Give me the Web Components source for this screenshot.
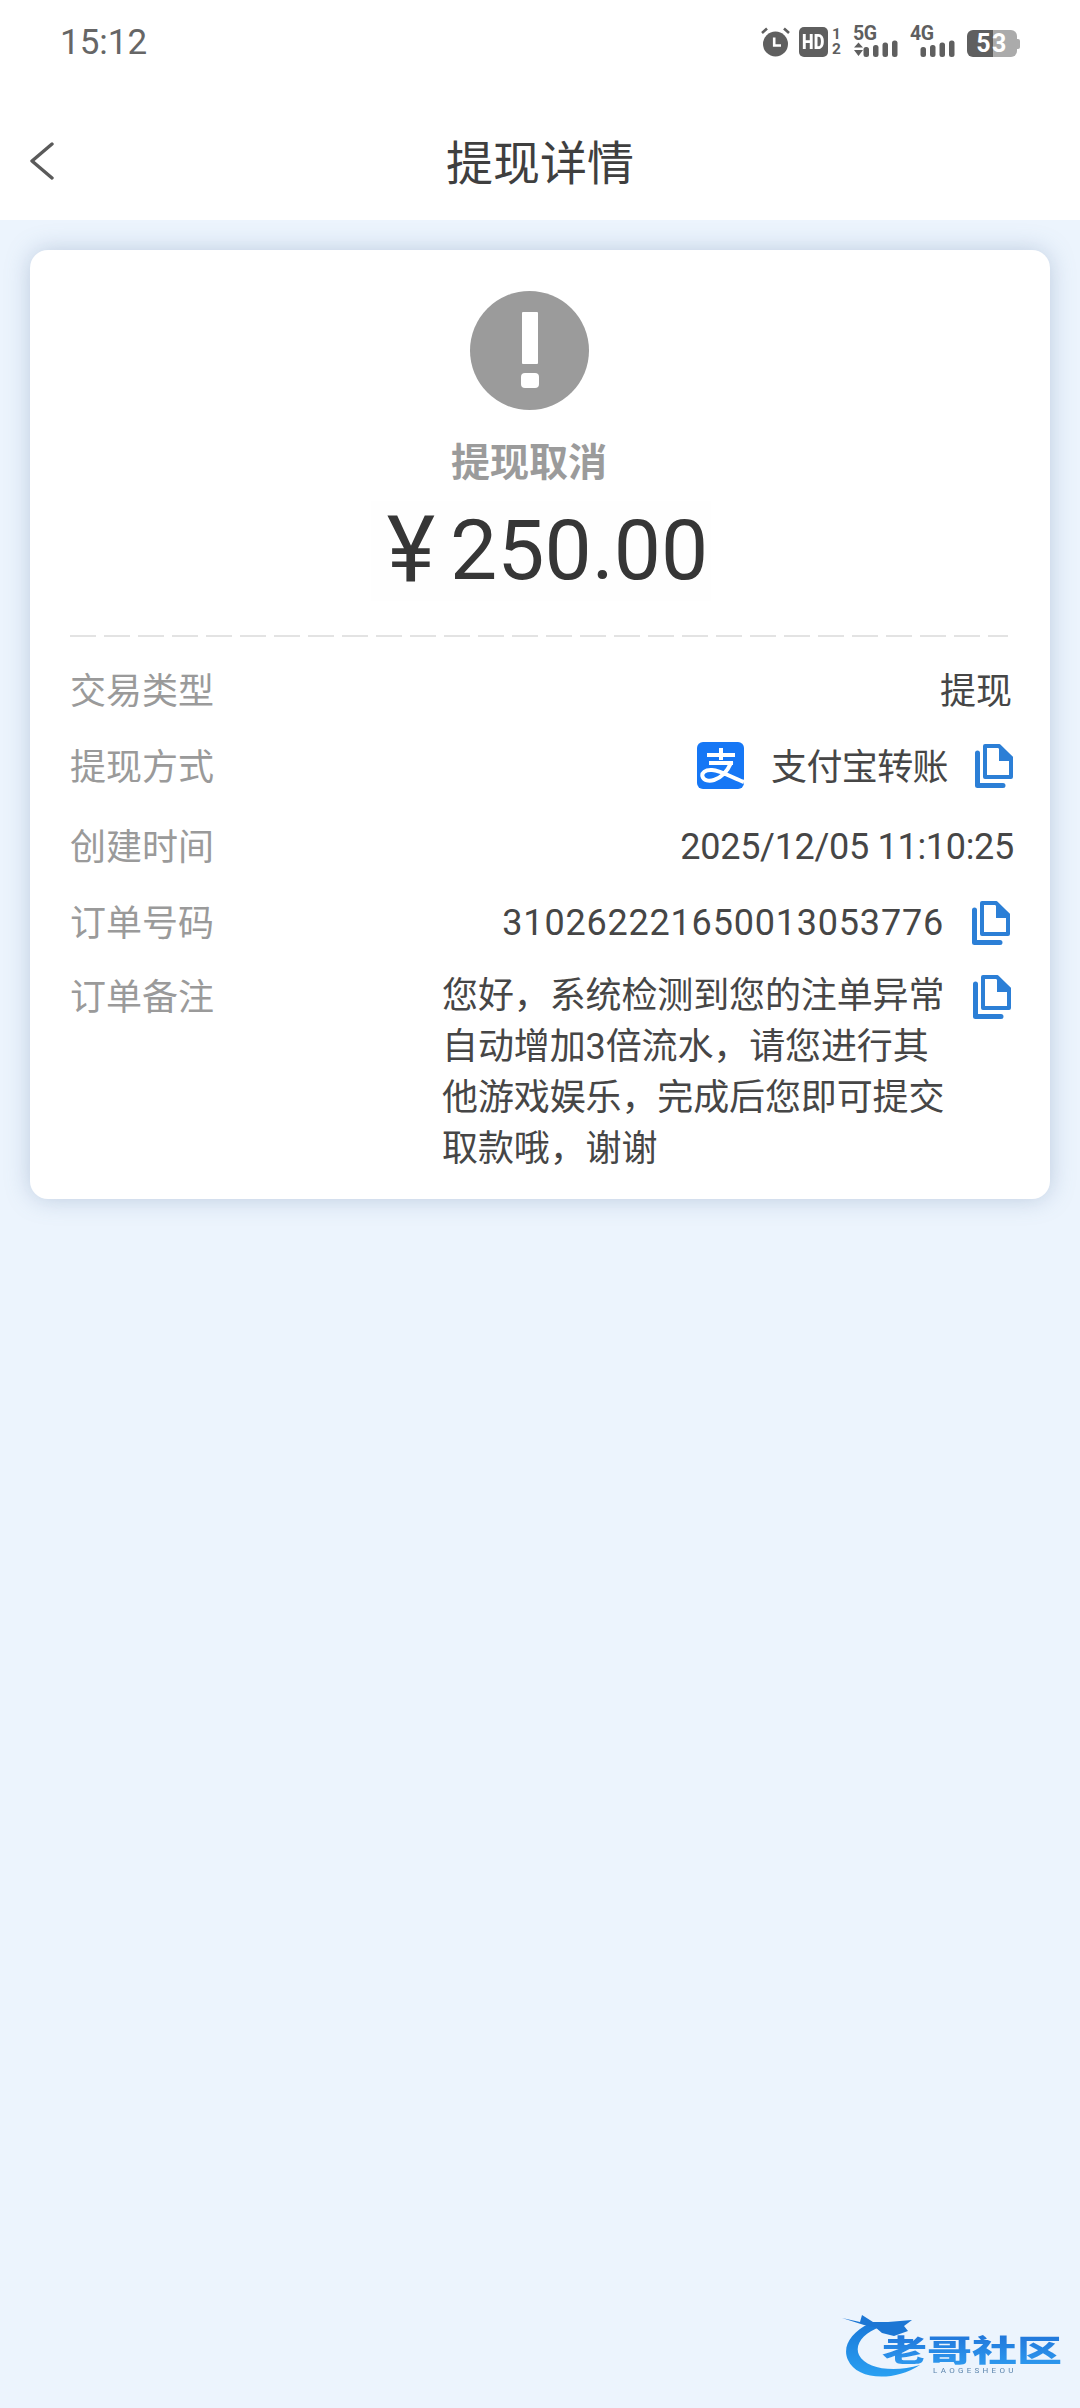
<!DOCTYPE html>
<html lang="zh">
<head>
<meta charset="utf-8">
<title>提现详情</title>
<style>
html,body{margin:0;padding:0;background:#ecf4fd;}
body{width:1080px;height:2408px;overflow:hidden;position:relative;font-family:Roboto,"Noto Sans CJK SC",sans-serif;color:#3a3a3a;}
.up{transform:translateY(-3px);display:block}
</style>
</head>
<body>
<x-status-bar time="15:12"></x-status-bar>
<x-nav-bar title="提现详情"></x-nav-bar>
<x-detail-card>
  <x-hero slot="hero" status="提现取消" currency="¥" amount="250.00"></x-hero>
  <x-row label="交易类型" h="76"><span class="up" style="margin-right:2px">提现</span></x-row>
  <x-row label="提现方式" h="76"><x-alipay-icon style="margin-bottom:3px"></x-alipay-icon><span class="up" style="margin:0 27px;letter-spacing:-.6px">支付宝转账</span><x-copy-icon style="margin:0 1px 2px 0"></x-copy-icon></x-row>
  <x-row label="创建时间" h="76" top="4"><span style="letter-spacing:-.3px">2025/12/05 11:10:25</span></x-row>
  <x-row label="订单号码" h="76"><span style="letter-spacing:.8px;margin-right:-1px">310262221650013053776</span><x-copy-icon style="margin:0 4px 0 29px"></x-copy-icon></x-row>
  <x-row label="订单备注" top="10" align="start"><x-note>您好，系统检测到您的注单异常自动增加3倍流水，请您进行其他游戏娱乐，完成后您即可提交取款哦，谢谢</x-note><x-copy-icon style="margin:4px 3px 0 26px"></x-copy-icon></x-row>
</x-detail-card>
<x-watermark></x-watermark>
<script>
const FONT='Roboto,"Noto Sans CJK SC",sans-serif';
function def(name,html,init){
  const t=document.createElement('template');t.innerHTML=html;
  customElements.define(name,class extends HTMLElement{
    connectedCallback(){
      if(this.shadowRoot)return;
      const r=this.attachShadow({mode:'open'});
      r.appendChild(t.content.cloneNode(true));
      if(init)init(this,r);
    }
  });
}
def('x-signal',`<style>
:host{display:block;position:relative;width:45px;height:30px;flex:none}
span{position:absolute;left:-1px;top:-3px;font:700 19.500px/20px Roboto,sans-serif;color:#5f5f5f;letter-spacing:-.5px;white-space:nowrap}
svg{display:block}
</style><span></span>
<svg width="45" height="30" viewBox="0 0 45 30"><path class="ar" d="M4.500 15.500 9 20.500H0ZM0 23H9L4.500 29Z" fill="#5f5f5f"/><g fill="#5f5f5f"><rect x="9.500" y="20" width="5.500" height="10" rx="2.500"/><rect x="19" y="18" width="5.500" height="12" rx="2.500"/><rect x="28.500" y="15.500" width="5.500" height="14.500" rx="2.500"/><rect x="38" y="13.500" width="5.500" height="16.500" rx="2.500"/></g></svg>`,
(h,r)=>{r.querySelector('span').textContent=h.getAttribute('net');if(h.hasAttribute('noarrows'))r.querySelector('.ar').remove();});

def('x-status-bar',`<style>
:host{display:flex;align-items:center;height:84px;padding:0 60px;background:#fff;box-sizing:border-box;width:1080px;font-family:${FONT}}
.t{font-size:35px;color:#666;flex:1}
svg{display:block;flex:none}
.hd{display:flex;align-items:center;justify-content:center;width:29px;height:30px;border-radius:5px;background:#5f5f5f;margin-right:3px;flex:none}
.hd span{font:900 21px/30px Roboto,sans-serif;color:#fff;transform:scaleX(.78);display:block}
.sim{display:flex;flex-direction:column;justify-content:space-between;width:11px;height:30px;margin-right:12px;font:700 15.500px/15px Roboto,sans-serif;color:#5f5f5f;text-align:center;flex:none}
.bat{display:flex;align-items:center;width:53px;height:27px;margin-top:3px;flex:none}
.bat .body{display:block;width:50px;height:27px;border-radius:6px;background:linear-gradient(90deg,#5f5f5f 0 26px,#ababab 26px)}
.bat .num{display:block;width:50px;text-align:center;font:700 25px/27px Roboto,sans-serif;color:#fff;letter-spacing:1.500px;white-space:nowrap}
.bat i{width:3px;height:10px;background:#ababab;border-radius:0 2px 2px 0}
x-signal.a{margin-right:12px}
x-signal.b{margin-right:11px}
</style>
<span class="t"></span>
<svg width="29" height="30" viewBox="0 0 29 30" style="margin-right:9px"><circle cx="14.500" cy="17" r="12.500" fill="#5f5f5f"/><path d="M13.200 10.500V18.500H20" fill="none" stroke="#fff" stroke-width="2.600"/><path d="M1 6 6 1.500M28 6 23 1.500" stroke="#5f5f5f" stroke-width="2.600"/></svg>
<span class="hd"><span>HD</span></span>
<span class="sim"><span>1</span><span>2</span></span>
<x-signal class="a" net="5G"></x-signal>
<x-signal class="b" net="4G" noarrows></x-signal>
<span class="bat"><span class="body"><span class="num">53</span></span><i></i></span>`,
(h,r)=>{r.querySelector('.t').textContent=h.getAttribute('time')});

def('x-nav-bar',`<style>
:host{display:flex;align-items:center;justify-content:center;position:relative;height:136px;padding-top:24px;box-sizing:border-box;width:1080px;background:#fff;font-family:${FONT}}
.t{font-size:47px;color:#3f3f3f;line-height:60px}
svg{position:absolute;left:29px;top:58px}
</style>
<svg width="26" height="38" viewBox="0 0 26 38"><path d="M23 2 3 19 23 36" fill="none" stroke="#5a5a5a" stroke-width="3.400" stroke-linecap="round" stroke-linejoin="round"/></svg>
<span class="t"></span>`,
(h,r)=>{r.querySelector('.t').textContent=h.getAttribute('title')});

def('x-detail-card',`<style>
:host{display:block;box-sizing:border-box;width:1020px;margin:30px 30px 0;padding:0 36px 24px 40px;background:#fff;border-radius:18px;box-shadow:0 0 24px rgba(96,125,165,.34);font-family:${FONT}}
.rule{height:2px;margin:0 6px 16px 0;background:repeating-linear-gradient(90deg,#e3e3e3 0 26px,transparent 26px 34px)}
</style>
<slot name="hero"></slot>
<div class="rule"></div>
<slot></slot>`);

def('x-hero',`<style>
:host{display:flex;flex-direction:column;align-items:center;padding-top:41px;margin-bottom:34px}
svg{display:block;margin-right:26px}
.s{margin:28px 26px 0 0;font-size:39px;line-height:50px;font-weight:700;color:#9b9b9b}
.a{display:flex;align-items:center;height:100px;margin:13px 2px 0 0;font-size:84px;color:#363636;background:#fefefe;padding:0 3px 0 16px}
.c{margin-right:15px;font-size:92px;line-height:100px}
.n{line-height:100px}
</style>
<svg width="119" height="119" viewBox="0 0 119 119"><circle cx="59.500" cy="59.500" r="59.500" fill="#9b9b9b"/><rect x="52" y="21" width="16" height="52" rx="1" fill="#fff"/><rect x="51" y="82" width="18" height="15" rx="4" fill="#fff"/></svg>
<div class="s"></div>
<div class="a"><span class="c"></span><span class="n"></span></div>`,
(h,r)=>{r.querySelector('.s').textContent=h.getAttribute('status');r.querySelector('.c').textContent=h.getAttribute('currency');r.querySelector('.n').textContent=h.getAttribute('amount')});

def('x-row',`<style>
:host{display:flex;justify-content:space-between;font-size:36px;color:#464646;box-sizing:border-box}
.l{color:#9a9a9a;flex:none;transform:translateY(-3px)}
.v{display:flex}
</style>
<span class="l"></span><div class="v"><slot></slot></div>`,
(h,r)=>{
  r.querySelector('.l').textContent=h.getAttribute('label');
  const a=h.getAttribute('align')==='start'?'flex-start':'center';
  h.style.alignItems=a;
  r.querySelector('.v').style.alignItems=a;
  if(h.getAttribute('h'))h.style.height=h.getAttribute('h')+'px';
  if(h.getAttribute('top'))h.style.marginTop=h.getAttribute('top')+'px';
});

def('x-note',`<style>:host{display:block;width:505px;font-size:36px;line-height:51px;color:#464646;letter-spacing:-.12px}</style><slot></slot>`);

def('x-copy-icon',`<style>:host{display:block;width:38px;height:44px;flex:none}svg{display:block}</style>
<svg width="38" height="44" viewBox="0 0 38 44"><path d="M2.500 9V41.500H28" fill="none" stroke="#2c7fd6" stroke-width="5" stroke-linecap="round" stroke-linejoin="round"/><path d="M10 2H24L36 14V33H10Z" fill="none" stroke="#2c7fd6" stroke-width="4" stroke-linejoin="round"/><path d="M24 0 38 13V17H24Z" fill="#2c7fd6"/></svg>`);

def('x-alipay-icon',`<style>:host{display:block;width:47px;height:47px;flex:none}svg{display:block}</style>
<svg width="47" height="47" viewBox="0 0 47 47"><rect width="47" height="47" rx="6" fill="#1677f5"/><path d="M10 13H38M24 6V18M12 21H36" fill="none" stroke="#fff" stroke-width="4"/><path d="M47 40C36 36 24 28.500 15 28C8 27.500 4.500 31 5.500 34.500C6.500 38.500 12 39.500 17 38C25 35.500 31 28 34.500 20" fill="none" stroke="#fff" stroke-width="4"/></svg>`);

def('x-watermark',`<style>
:host{display:block;position:absolute;left:842px;top:2313px;width:222px;height:68px;font-family:"Noto Sans CJK SC",sans-serif;filter:blur(.6px)}
svg{position:absolute;left:0;top:0}
.cn{position:absolute;left:40px;top:15px;font-size:30px;line-height:40px;font-weight:900;white-space:nowrap;transform:scaleX(1.5);transform-origin:0 50%;background:linear-gradient(#1e6fd6,#2f9cf0);-webkit-background-clip:text;background-clip:text;color:transparent}
.en{position:absolute;left:91px;top:53px;font:8px/10px Roboto,sans-serif;letter-spacing:3.300px;color:#5d86ad;white-space:nowrap}
</style>
<svg width="222" height="68" viewBox="0 0 222 68"><defs><linearGradient id="g" x1="0" y1="0" x2="0" y2="1"><stop offset="0" stop-color="#1a78d8"/><stop offset="1" stop-color="#2aa0f2"/></linearGradient></defs>
<path d="M28 10C8 20 0 34 6 47C14 66 50 70 78 52C52 60 24 56 17 42C12 31 22 20 38 14Z" fill="url(#g)"/>
<path d="M0 5L18 9L20 2L31 9L46 9L70 7L62 13L66 18L52 23L40 20L33 14L22 12Z" fill="#1c76d4"/></svg>
<span class="cn">老哥社区</span><span class="en">LAOGESHEOU</span>`);
</script>
</body>
</html>
